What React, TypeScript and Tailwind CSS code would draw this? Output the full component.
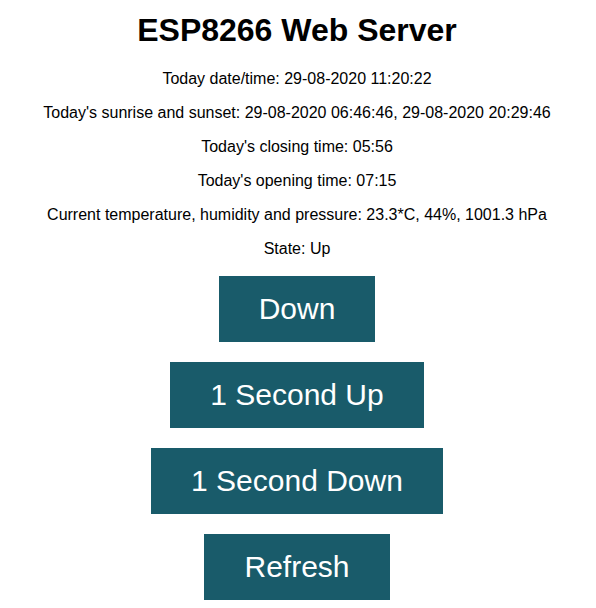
const lines = [
  "Today date/time: 29-08-2020 11:20:22",
  "Today's sunrise and sunset: 29-08-2020 06:46:46, 29-08-2020 20:29:46",
  "Today's closing time: 05:56",
  "Today's opening time: 07:15",
  "Current temperature, humidity and pressure: 23.3*C, 44%, 1001.3 hPa",
  "State: Up",
];

const buttons = ["Down", "1 Second Up", "1 Second Down", "Refresh"];

export default function App() {
  return (
    <div className="h-[608px] overflow-hidden bg-white pr-[2px] text-center text-[16px] text-black font-['Liberation_Sans',Arial,sans-serif] leading-[normal]">
      <div className="pt-[12px]">
        <h1 className="mb-[21px] text-[32px] leading-[normal] font-bold">ESP8266 Web Server</h1>
        {lines.map((line) => (
          <p key={line} className="my-4 leading-[normal]">
            {line}
          </p>
        ))}
        {buttons.map((label) => (
          <p key={label} className="my-4 leading-[normal]">
            <a href="#">
              <button className="m-[2px] inline-block cursor-pointer bg-[#195B6A] px-10 py-4 text-[30px] leading-[normal] text-white">
                {label}
              </button>
            </a>
          </p>
        ))}
      </div>
    </div>
  );
}
